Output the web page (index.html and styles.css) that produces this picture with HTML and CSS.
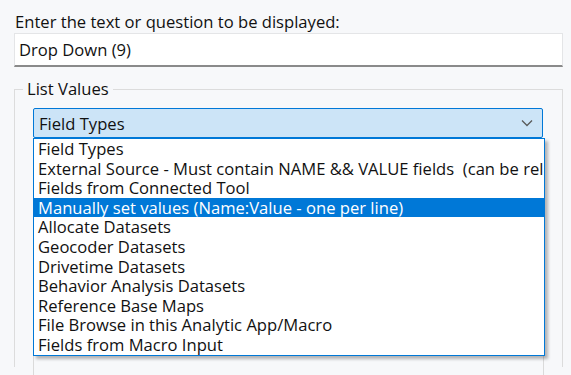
FILE: index.html
```html
<!DOCTYPE html>
<html lang="en">
<head>
    <meta charset="UTF-8">
    <title>Drop Down (9)</title>
    <link rel="stylesheet" href="styles.css">
</head>
<body>
    <div class="question-block">
        <label class="prompt" for="question">Enter the text or question to be displayed:</label>
        <div class="text-input" id="question">Drop Down (9)</div>
    </div>

    <fieldset class="list-values">
        <legend>List Values</legend>
        <div class="combo-wrap">
            <div class="combo">
                <span class="combo-value">Field Types</span>
                <svg class="chevron" width="12" height="8" viewBox="0 0 12 8">
                    <path d="M1 1.5 L6 6.5 L11 1.5" fill="none" stroke="#5a5a5a" stroke-width="1.3"/>
                </svg>
            </div>
            <ul class="combo-list">
                <li>Field Types</li>
                <li>External Source - Must contain NAME &amp;&amp; VALUE fields &nbsp;(can be rel</li>
                <li>Fields from Connected Tool</li>
                <li class="selected">Manually set values (Name:Value - one per line)</li>
                <li>Allocate Datasets</li>
                <li>Geocoder Datasets</li>
                <li>Drivetime Datasets</li>
                <li>Behavior Analysis Datasets</li>
                <li>Reference Base Maps</li>
                <li>File Browse in this Analytic App/Macro</li>
                <li>Fields from Macro Input</li>
            </ul>
        </div>
        <div class="values-box"></div>
    </fieldset>
</body>
</html>
```

FILE: styles.css
```css
* {
    margin: 0;
    padding: 0;
    box-sizing: border-box;
}

body {
    font-family: "Open Sans", "Noto Sans", sans-serif;
    font-size: 16.6px;
    color: #111111;
    background: #f7f8fa;
    padding: 11px 8px 0 14px;
    height: 375px;
    overflow: hidden;
}

.prompt {
    display: block;
    line-height: 21px;
    padding-left: 1px;
}

.text-input {
    margin-top: 1px;
    height: 34px;
    background: #ffffff;
    border: 1px solid #e4e5e7;
    border-bottom: 2px solid #8a8a8a;
    padding: 5px 4px;
    line-height: 22px;
}

.list-values {
    margin-top: 12px;
    border: 1px solid #dcdcdc;
    border-bottom: none;
    padding: 9px 19px 0 18px;
    height: 288px;
}

.list-values legend {
    margin-left: -10px;
    padding: 0 4px;
    line-height: 20px;
}

.combo-wrap {
    position: relative;
}

.combo {
    height: 30px;
    background: #cce4f7;
    border: 1px solid #0078d7;
    border-radius: 2px;
    display: flex;
    align-items: center;
    justify-content: space-between;
    padding: 0 9px 0 5px;
}

.chevron {
    display: block;
}

.combo-list {
    position: absolute;
    top: 30px;
    left: 0;
    width: 512px;
    list-style: none;
    background: #ffffff;
    border: 1px solid #0078d7;
    box-shadow: 3px 3px 3px rgba(0, 0, 0, 0.28);
    overflow: hidden;
    z-index: 2;
}

.combo-list li {
    height: 19.6px;
    line-height: 19.6px;
    padding-left: 4px;
    white-space: nowrap;
}

.combo-list li.selected {
    background: #0078d7;
    color: #ffffff;
}

.values-box {
    margin-top: 8px;
    height: 240px;
    border: 1px solid #dadada;
    border-bottom: none;
    margin-right: -1px;
}
```
